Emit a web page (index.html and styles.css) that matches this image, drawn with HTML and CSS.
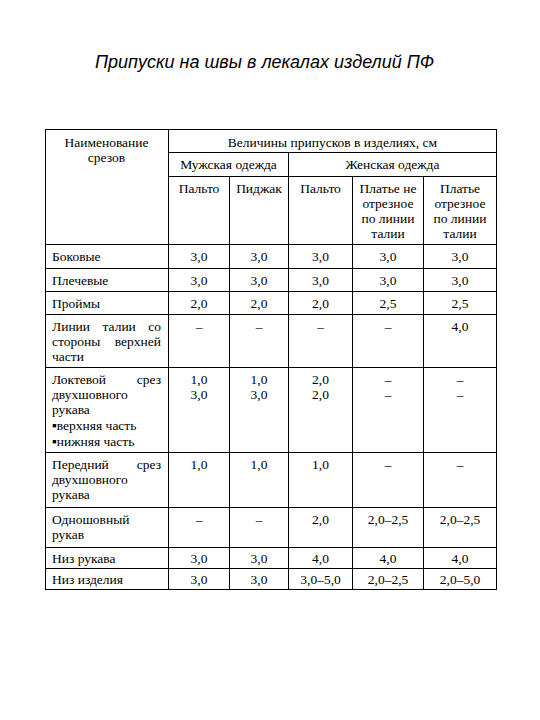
FILE: index.html
```html
<!DOCTYPE html>
<html lang="ru">
<head>
<meta charset="utf-8">
<link rel="stylesheet" href="styles.css">
</head>
<body>
<div class="page">
  <h1 class="title">Припуски на швы в лекалах изделий ПФ</h1>
  <table class="tbl">
    <colgroup>
      <col class="c0"><col class="c1"><col class="c2"><col class="c3"><col class="c4"><col class="c5">
    </colgroup>
    <tr class="h1">
      <td rowspan="3" class="head-name">Наименование<br>срезов</td>
      <td colspan="5" class="ctr">Величины припусков в изделиях, см</td>
    </tr>
    <tr class="h2">
      <td colspan="2" class="ctr">Мужская одежда</td>
      <td colspan="3" class="ctr">Женская одежда</td>
    </tr>
    <tr class="h3">
      <td class="ctr">Пальто</td>
      <td class="ctr">Пиджак</td>
      <td class="ctr">Пальто</td>
      <td class="ctr">Платье не отрезное по линии талии</td>
      <td class="ctr">Платье отрезное по линии талии</td>
    </tr>
    <tr class="r24">
      <td class="name">Боковые</td>
      <td class="ctr">3,0</td><td class="ctr">3,0</td><td class="ctr">3,0</td><td class="ctr">3,0</td><td class="ctr">3,0</td>
    </tr>
    <tr>
      <td class="name">Плечевые</td>
      <td class="ctr">3,0</td><td class="ctr">3,0</td><td class="ctr">3,0</td><td class="ctr">3,0</td><td class="ctr">3,0</td>
    </tr>
    <tr>
      <td class="name">Проймы</td>
      <td class="ctr">2,0</td><td class="ctr">2,0</td><td class="ctr">2,0</td><td class="ctr">2,5</td><td class="ctr">2,5</td>
    </tr>
    <tr>
      <td class="name just">Линии талии со стороны верхней части</td>
      <td class="ctr">–</td><td class="ctr">–</td><td class="ctr">–</td><td class="ctr">–</td><td class="ctr">4,0</td>
    </tr>
    <tr>
      <td class="name"><div class="just">Локтевой срез двухшовного рукава</div><div class="bul">▪верхняя часть</div><div class="bul">▪нижняя часть</div></td>
      <td class="ctr">1,0<br>3,0</td><td class="ctr">1,0<br>3,0</td><td class="ctr">2,0<br>2,0</td><td class="ctr">–<br>–</td><td class="ctr">–<br>–</td>
    </tr>
    <tr class="pb5">
      <td class="name just">Передний срез двухшовного рукава</td>
      <td class="ctr">1,0</td><td class="ctr">1,0</td><td class="ctr">1,0</td><td class="ctr">–</td><td class="ctr">–</td>
    </tr>
    <tr class="pb5">
      <td class="name">Одношовный рукав</td>
      <td class="ctr">–</td><td class="ctr">–</td><td class="ctr">2,0</td><td class="ctr">2,0–2,5</td><td class="ctr">2,0–2,5</td>
    </tr>
    <tr class="r21">
      <td class="name">Низ рукава</td>
      <td class="ctr">3,0</td><td class="ctr">3,0</td><td class="ctr">4,0</td><td class="ctr">4,0</td><td class="ctr">4,0</td>
    </tr>
    <tr class="r21">
      <td class="name">Низ изделия</td>
      <td class="ctr">3,0</td><td class="ctr">3,0</td><td class="ctr">3,0–5,0</td><td class="ctr">2,0–2,5</td><td class="ctr">2,0–5,0</td>
    </tr>
  </table>
</div>
</body>
</html>
```

FILE: styles.css
```css
html, body {
  margin: 0;
  padding: 0;
  background: #ffffff;
}
.page {
  padding: 51px 0 0 45px;
  color: #000;
}
.title {
  margin: 0 0 55px 50px;
  font-family: "Liberation Sans", Arial, sans-serif;
  font-style: italic;
  font-weight: normal;
  font-size: 18px;
  line-height: 23px;
}
.tbl {
  border-collapse: collapse;
  table-layout: fixed;
  width: 451px;
  font-family: "Liberation Serif", "Times New Roman", serif;
  font-size: 13.5px;
  line-height: 15px;
}
.c0 { width: 123px; }
.c1 { width: 61px; }
.c2 { width: 59px; }
.c3 { width: 64px; }
.c4 { width: 71px; }
.c5 { width: 73px; }
.tbl td {
  border: 1px solid #000;
  padding: 4px 7px 3px 6px;
  vertical-align: top;
}
.tbl td.ctr {
  text-align: center;
  padding-left: 5px;
  padding-right: 5px;
}
.tbl .h1 td { padding-top: 5px; padding-bottom: 2px; }
.tbl .h2 td { padding-bottom: 4px; }
.tbl .r24 td { padding-bottom: 4px; }
.tbl .pb5 td { padding-bottom: 5px; }
.tbl .r21 td { padding-top: 3px; padding-bottom: 2px; }
.tbl td.head-name { text-align: center; }
.name { text-align: left; }
.tbl td.just,
.just {
  text-align: justify;
  text-align-last: left;
}
.bul { padding-top: 1px; }
```
